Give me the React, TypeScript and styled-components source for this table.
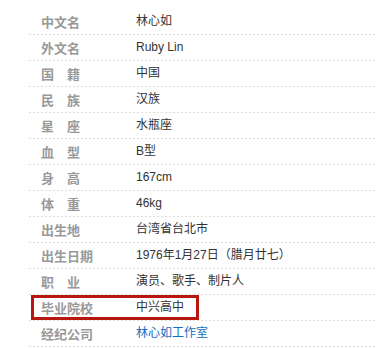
import React from 'react';
import styled, { createGlobalStyle } from 'styled-components';

const GlobalStyle = createGlobalStyle`
  html, body {
    margin: 0;
    padding: 0;
    background: #fff;
  }
`;

const Wrapper = styled.div`
  padding: 9px 0 0 29px;
  width: 347px;
`;

const InfoList = styled.dl`
  margin: 0;
  display: flex;
  flex-direction: column;
`;

const Row = styled.div<{ $highlight?: boolean }>`
  position: relative;
  display: flex;
  height: 25px;
  line-height: 25px;
  padding-bottom: 1px;
  background-image: linear-gradient(to right, #dcdcdc 50%, transparent 50%);
  background-size: 4px 1px;
  background-repeat: repeat-x;
  background-position: 0 bottom;

  ${(p) =>
    p.$highlight &&
    `
    &::after {
      content: '';
      position: absolute;
      left: 2px;
      top: 0;
      width: 162px;
      height: 19px;
      border: 3px solid #b8170f;
    }
  `}
`;

const Label = styled.dt`
  width: 95px;
  padding-left: 12px;
  font-family: "Noto Sans CJK SC", sans-serif;
  font-weight: bold;
  font-size: 13px;
  color: #999;
  white-space: pre;
`;

const Value = styled.dd<{ $link?: boolean }>`
  margin: 0;
  font-family: "Liberation Sans", "Noto Sans CJK SC", sans-serif;
  font-size: 12px;
  color: ${(p) => (p.$link ? '#136ec2' : '#333')};
`;

const rows: { label: string; value: string; link?: boolean; highlight?: boolean }[] = [
  { label: '中文名', value: '林心如' },
  { label: '外文名', value: 'Ruby Lin' },
  { label: '国　籍', value: '中国' },
  { label: '民　族', value: '汉族' },
  { label: '星　座', value: '水瓶座' },
  { label: '血　型', value: 'B型' },
  { label: '身　高', value: '167cm' },
  { label: '体　重', value: '46kg' },
  { label: '出生地', value: '台湾省台北市' },
  { label: '出生日期', value: '1976年1月27日（腊月廿七）' },
  { label: '职　业', value: '演员、歌手、制片人' },
  { label: '毕业院校', value: '中兴高中', highlight: true },
  { label: '经纪公司', value: '林心如工作室', link: true },
];

const App: React.FC = () => {
  return (
    <>
      <GlobalStyle />
      <Wrapper>
        <InfoList>
          {rows.map((r) => (
            <Row key={r.label} $highlight={r.highlight}>
              <Label>{r.label}</Label>
              <Value $link={r.link}>{r.value}</Value>
            </Row>
          ))}
        </InfoList>
      </Wrapper>
    </>
  );
};

export default App;
